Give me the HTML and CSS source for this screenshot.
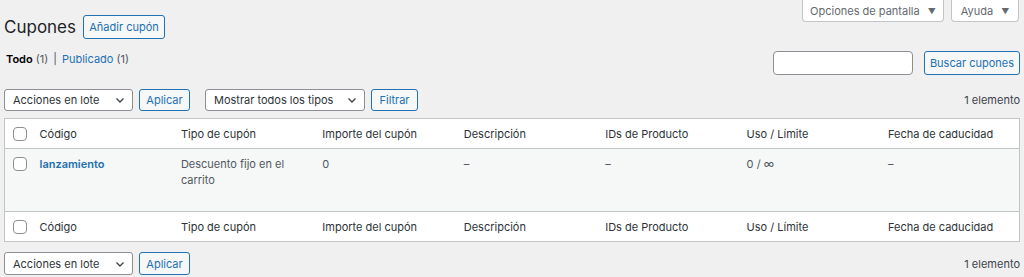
FILE: index.html
```html
<!DOCTYPE html>
<html lang="es">
<head>
    <meta charset="UTF-8">
    <meta name="viewport" content="width=device-width, initial-scale=1.0">
    <title>Cupones</title>
    <link rel="stylesheet" href="styles.css">
</head>
<body>
    <div class="wrap">
        <div class="page-top">
            <div class="heading">
                <h1>Cupones</h1>
                <a class="button btn-add" href="#">Añadir cupón</a>
            </div>
            <div class="screen-links">
                <button class="screen-tab tab-options">Opciones de pantalla <span class="arrow">▼</span></button>
                <button class="screen-tab tab-help">Ayuda <span class="arrow">▼</span></button>
            </div>
        </div>

        <div class="list-top">
            <ul class="subsubsub">
                <li><b>Todo</b> <span class="count">(1)</span></li>
                <li class="sep">|</li>
                <li><a href="#">Publicado</a> <span class="count">(1)</span></li>
            </ul>
            <div class="search-box">
                <input type="search" class="search-input">
                <button class="button">Buscar cupones</button>
            </div>
        </div>

        <!-- Top bulk actions / filters -->
        <div class="tablenav">
            <div class="select select-bulk">Acciones en lote
                <svg class="chevron" viewBox="0 0 12 12" width="12" height="12"><path d="M2.5 4.5 6 8l3.5-3.5" fill="none" stroke="#3c434a" stroke-width="1.3"/></svg>
            </div>
            <button class="button small btn-apply">Aplicar</button>
            <div class="select select-type">Mostrar todos los tipos
                <svg class="chevron" viewBox="0 0 12 12" width="12" height="12"><path d="M2.5 4.5 6 8l3.5-3.5" fill="none" stroke="#3c434a" stroke-width="1.3"/></svg>
            </div>
            <button class="button small btn-filter">Filtrar</button>
            <span class="num-items">1 elemento</span>
        </div>

        <table class="list-table">
            <colgroup>
                <col class="col-check">
                <col><col><col><col><col><col><col>
            </colgroup>
            <thead>
                <tr>
                    <th class="check"><span class="checkbox"></span></th>
                    <th>Código</th>
                    <th>Tipo de cupón</th>
                    <th>Importe del cupón</th>
                    <th>Descripción</th>
                    <th>IDs de Producto</th>
                    <th>Uso / Límite</th>
                    <th>Fecha de caducidad</th>
                </tr>
            </thead>
            <tbody>
                <tr class="row">
                    <td class="check"><span class="checkbox"></span></td>
                    <td><a class="row-title" href="#">lanzamiento</a></td>
                    <td>Descuento fijo en el carrito</td>
                    <td>0</td>
                    <td class="dash">–</td>
                    <td class="dash">–</td>
                    <td>0 / ∞</td>
                    <td class="dash">–</td>
                </tr>
            </tbody>
            <tfoot>
                <tr>
                    <th class="check"><span class="checkbox"></span></th>
                    <th>Código</th>
                    <th>Tipo de cupón</th>
                    <th>Importe del cupón</th>
                    <th>Descripción</th>
                    <th>IDs de Producto</th>
                    <th>Uso / Límite</th>
                    <th>Fecha de caducidad</th>
                </tr>
            </tfoot>
        </table>

        <!-- Bottom bulk actions -->
        <div class="tablenav bottom">
            <div class="select select-bulk">Acciones en lote
                <svg class="chevron" viewBox="0 0 12 12" width="12" height="12"><path d="M2.5 4.5 6 8l3.5-3.5" fill="none" stroke="#3c434a" stroke-width="1.3"/></svg>
            </div>
            <button class="button small btn-apply">Aplicar</button>
            <span class="num-items">1 elemento</span>
        </div>
    </div>
</body>
</html>
```

FILE: styles.css
```css
body {
    margin: 0;
    padding: 0;
    background-color: #f0f0f1;
    font-family: Inter, "Liberation Sans", sans-serif;
    font-size: 11px;
    color: #3c434a;
}
.wrap {
    padding: 0 4px;
}
a {
    color: #2271b1;
    text-decoration: none;
}

/* Header */
.page-top {
    display: flex;
    justify-content: space-between;
    align-items: flex-start;
}
.heading {
    display: flex;
    align-items: center;
    gap: 7px;
    margin-top: 15px;
}
h1 {
    margin: 0;
    font-size: 17px;
    font-weight: 400;
    line-height: 24px;
    color: #1d2327;
}
.button {
    display: inline-flex;
    align-items: center;
    justify-content: center;
    box-sizing: border-box;
    height: 24px;
    padding: 0 6px;
    border: 1px solid #2271b1;
    border-radius: 3px;
    background: #f6f7f7;
    color: #2271b1;
    font-family: inherit;
    font-size: 11px;
    white-space: nowrap;
    cursor: pointer;
}
.button.small {
    height: 22px;
}
.btn-add { width: 82px; }
.btn-apply { width: 51px; }
.btn-filter { width: 47px; }
.screen-links {
    display: flex;
    gap: 7px;
    margin-right: 1px;
}
.screen-tab {
    box-sizing: border-box;
    height: 22px;
    padding: 0;
    border: 1px solid #c3c4c7;
    border-top: none;
    border-radius: 0 0 4px 4px;
    background: #fff;
    color: #646970;
    font-family: inherit;
    font-size: 11px;
    white-space: nowrap;
}
.tab-options { width: 142px; }
.tab-help { width: 68px; }
.arrow {
    font-size: 8px;
    margin-left: 5px;
    vertical-align: 1px;
}

/* Views + search */
.list-top {
    display: flex;
    justify-content: space-between;
    align-items: flex-start;
    margin-top: 12px;
}
.subsubsub {
    display: flex;
    gap: 5px;
    list-style: none;
    margin: 0 0 0 2px;
    padding: 0;
    line-height: 16px;
}
.subsubsub b {
    color: #000;
    font-weight: 600;
}
.subsubsub .count,
.subsubsub .sep {
    color: #50575e;
}
.search-box {
    display: flex;
    gap: 11px;
}
.search-input {
    box-sizing: border-box;
    width: 140px;
    height: 24px;
    margin: 0;
    border: 1px solid #8c8f94;
    border-radius: 4px;
    background: #fff;
}
.search-box .button {
    width: 96px;
}

/* Table nav */
.tablenav {
    display: flex;
    align-items: center;
    height: 22px;
    margin-top: 14px;
}
.tablenav.bottom {
    margin-top: 10px;
    height: 23px;
}
.select {
    display: flex;
    align-items: center;
    box-sizing: border-box;
    height: 22px;
    padding: 0 6px 0 8px;
    border: 1px solid #8c8f94;
    border-radius: 3px;
    background: #fff;
    color: #2c3338;
}
.bottom .select,
.bottom .button {
    height: 23px;
}
.select .chevron {
    margin-left: auto;
}
.select-bulk {
    width: 129px;
    margin-right: 6px;
}
.select-type {
    width: 160px;
    margin: 0 6px 0 15px;
}
.num-items {
    margin-left: auto;
    color: #3c434a;
}

/* List table */
.list-table {
    width: 100%;
    margin-top: 7px;
    border: 1px solid #c3c4c7;
    border-collapse: collapse;
    table-layout: fixed;
    background: #fff;
}
.col-check {
    width: 25px;
}
.list-table th {
    height: 29px;
    padding: 0 10px;
    text-align: left;
    font-weight: 400;
    color: #2c3338;
    line-height: 16px;
}
.list-table thead th {
    border-bottom: 1px solid #c3c4c7;
}
.list-table tfoot th {
    border-top: 1px solid #c3c4c7;
}
.list-table th.check,
.list-table td.check {
    padding: 0 0 0 8px;
}
.list-table .row {
    height: 63px;
    background: #f6f7f7;
}
.list-table td {
    vertical-align: top;
    padding: 7px 10px;
    line-height: 16px;
    color: #50575e;
}
.list-table td.check {
    padding-top: 8px;
}
.row-title {
    font-weight: 600;
}
.dash {
    color: #8c8f94;
}
.checkbox {
    display: block;
    box-sizing: border-box;
    width: 14px;
    height: 14px;
    border: 1px solid #8c8f94;
    border-radius: 4px;
    background: #fff;
}
```
